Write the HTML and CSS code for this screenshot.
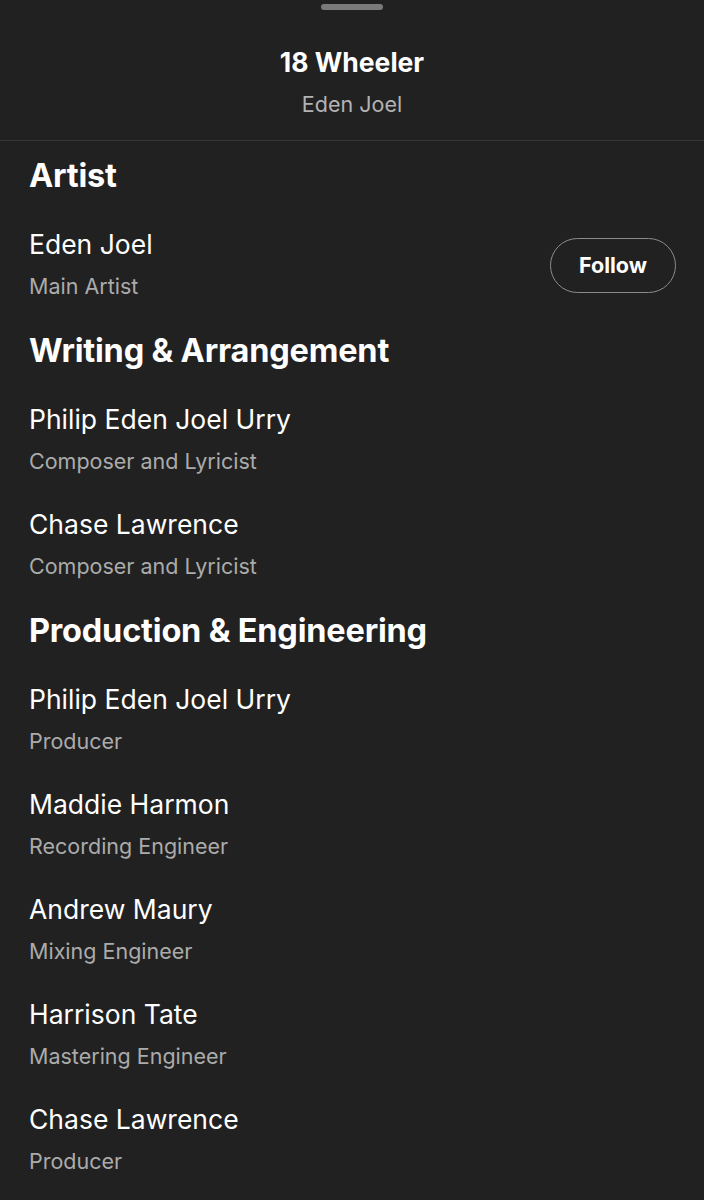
FILE: index.html
```html
<!DOCTYPE html>
<html lang="en">
<head>
    <meta charset="UTF-8">
    <meta name="viewport" content="width=device-width, initial-scale=1.0">
    <title>Credits</title>
    <link rel="stylesheet" href="styles.css">
</head>
<body>
    <div class="sheet">
        <div class="sheet-header">
            <div class="handle"></div>
            <div class="track-title">18 Wheeler</div>
            <div class="track-artist">Eden Joel</div>
        </div>

        <div class="credits">
            <div class="section">
                <h2>Artist</h2>
                <div class="credit">
                    <div class="credit-text">
                        <div class="name">Eden Joel</div>
                        <div class="role">Main Artist</div>
                    </div>
                    <button class="follow-btn">Follow</button>
                </div>
            </div>

            <div class="section">
                <h2>Writing &amp; Arrangement</h2>
                <div class="credit">
                    <div class="credit-text">
                        <div class="name">Philip Eden Joel Urry</div>
                        <div class="role">Composer and Lyricist</div>
                    </div>
                </div>
                <div class="credit">
                    <div class="credit-text">
                        <div class="name">Chase Lawrence</div>
                        <div class="role">Composer and Lyricist</div>
                    </div>
                </div>
            </div>

            <div class="section">
                <h2>Production &amp; Engineering</h2>
                <div class="credit">
                    <div class="credit-text">
                        <div class="name">Philip Eden Joel Urry</div>
                        <div class="role">Producer</div>
                    </div>
                </div>
                <div class="credit">
                    <div class="credit-text">
                        <div class="name">Maddie Harmon</div>
                        <div class="role">Recording Engineer</div>
                    </div>
                </div>
                <div class="credit">
                    <div class="credit-text">
                        <div class="name">Andrew Maury</div>
                        <div class="role">Mixing Engineer</div>
                    </div>
                </div>
                <div class="credit">
                    <div class="credit-text">
                        <div class="name">Harrison Tate</div>
                        <div class="role">Mastering Engineer</div>
                    </div>
                </div>
                <div class="credit">
                    <div class="credit-text">
                        <div class="name">Chase Lawrence</div>
                        <div class="role">Producer</div>
                    </div>
                </div>
            </div>
        </div>
    </div>
</body>
</html>
```

FILE: styles.css
```css
body {
    margin: 0;
    background-color: #212121;
    color: white;
    font-family: Inter, "Noto Sans", sans-serif;
}
.sheet {
    min-height: 1200px;
}
.sheet-header {
    padding: 4px 0 20px;
    text-align: center;
    border-bottom: 1px solid #363636;
}
.handle {
    width: 62px;
    height: 6px;
    margin: 0 auto;
    border-radius: 3px;
    background-color: #7a7a7a;
}
.track-title {
    margin-top: 36px;
    font-size: 26.5px;
    font-weight: 700;
    line-height: 32px;
}
.track-artist {
    margin-top: 10px;
    font-size: 21.5px;
    line-height: 32px;
    color: #b3b3b3;
}
.credits {
    padding: 15px 29px 0;
}
.section {
    margin-bottom: 28px;
}
.section h2 {
    margin: 0 0 31px;
    font-size: 32.5px;
    font-weight: 700;
    line-height: 40px;
    letter-spacing: -0.2px;
}
.credit {
    display: flex;
    justify-content: space-between;
    align-items: center;
    height: 76px;
    margin-bottom: 29px;
}
.credit:last-child {
    margin-bottom: 0;
}
.name {
    font-size: 26.5px;
    line-height: 34px;
}
.role {
    margin-top: 8px;
    font-size: 21.5px;
    line-height: 34px;
    color: #ababab;
}
.follow-btn {
    width: 126px;
    height: 55px;
    margin-right: -1px;
    border: 1.5px solid #8c8c8c;
    border-radius: 28px;
    background: none;
    color: white;
    font-family: inherit;
    font-size: 21.5px;
    font-weight: 700;
    cursor: pointer;
}
```
